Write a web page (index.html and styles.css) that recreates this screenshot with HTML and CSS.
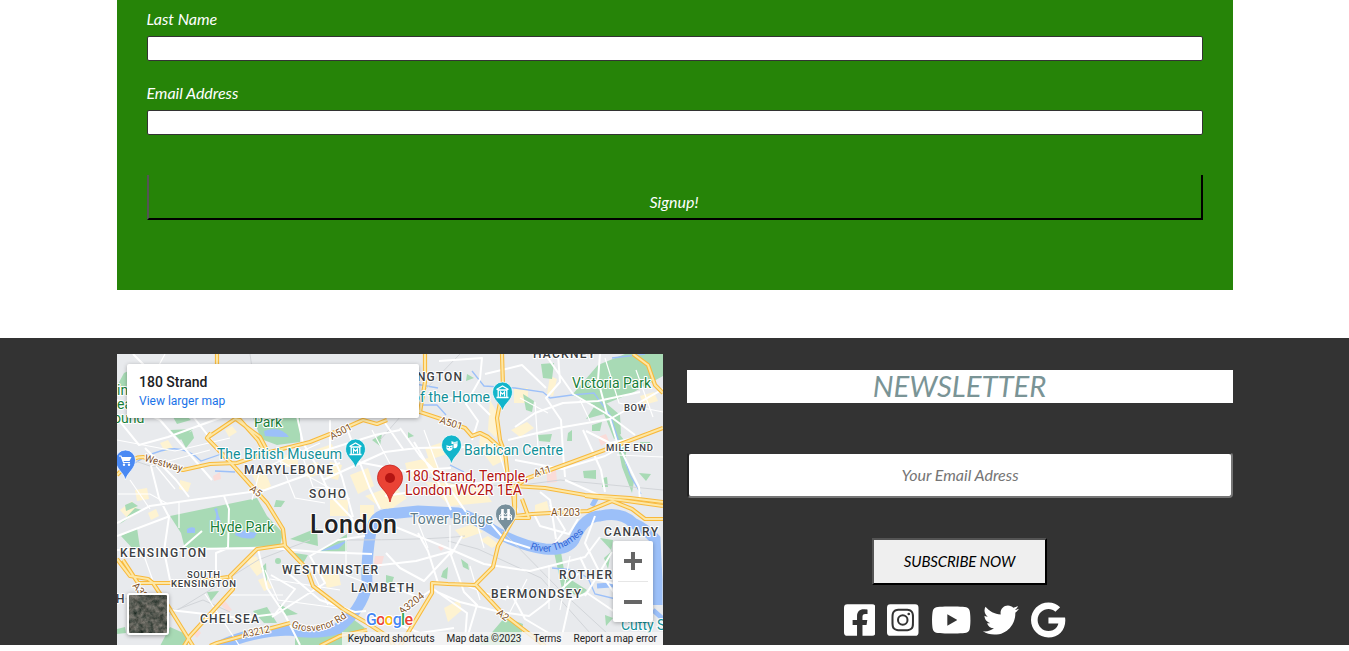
FILE: index.html
```html
<!DOCTYPE html>
<html lang="en">
<head>
<meta charset="utf-8">
<title>Newsletter signup</title>
<link rel="stylesheet" href="styles.css">
</head>
<body>
<form class="signup">
  <label class="signup-label" for="last">Last Name</label>
  <input class="signup-input" id="last" type="text">
  <label class="signup-label" for="email">Email Address</label>
  <input class="signup-input" id="email" type="text">
  <button class="signup-button" type="button">Signup!</button>
</form>
<footer class="footer">
  <div class="footer-inner">
    <div class="map">
      <svg class="map-canvas" viewBox="117 354 546 291">
        <defs>
          <g id="museum"><path class="pin" d="M0 15C-2 7-10 4-10-4A10 10 0 0 1 10-4C10 4 2 7 0 15Z"/><path d="M-6-6.500L0-10L6-6.500M-5-6H5M-4.300-6V1M4.300-6V1M-6 1.500H6" fill="none" stroke="#fff" stroke-width="1.300"/><path d="M-2 .500V-4L0-1.800L2-4V.500" fill="none" stroke="#fff" stroke-width="1.100"/></g>
          <g id="roads-major">
            <path d="M117 475L126 466Q132 457 143 457L166 465L183 470L210 464L237 463L270 452L310 442L345 428L363 420L377 424L387 420M420 412L438 418L465 428L472 436L480 433L488 437L505 452L508 478L513 490L515 516"/>
            <path d="M211 433L207 438L230 462L257 492L267 503L283 529L285 546L307 569L313 586L343 609L367 623L387 636L394 646"/>
            <path d="M207 438L235 419L240 420L258 440L265 453M236 419L260 437L268 452"/>
            <path d="M425 354V382L420 412L410 410M502 354L503 388L497 418L500 440L506 456"/>
            <path d="M513 488L528 478L572 462L618 445L663 428M513 486L545 488L585 495L630 498L663 502"/>
            <path d="M633 354L648 365L655 385L663 393M585 496L620 500L663 506M515 516L532 514L588 511L612 501L632 509L645 519L663 519"/>
            <path d="M285 545L257 549L230 576L233 589L190 636L184 646M117 559L130 576L148 579L153 583L170 609L193 646M123 560L138 583H185L228 577"/>
            <path d="M210 646L217 643L243 636L290 623M320 646L340 636L367 630"/>
            <path d="M400 646L432 593V583L448 584L475 585L493 567L498 546L515 516V490M475 584L502 613L545 646M515 518L529 518L522 499"/>
            <path d="M217 354V366L225 374"/>
          </g>
        </defs>
        <rect class="land" x="117" y="354" width="546" height="291"/>
        <g class="block-yellow">
          <path d="M160 443l8-3 5 8-8 4zM135 490l12-2 2 11-12 2zM180 480l11 3-3 9-9-3zM225 430l7-4 5 6-8 5zM280 455h18v12h-16zM302 466l16-4 3 12-14 4zM330 462l12 3-4 15-12-3zM350 475l18-7 6 18-16 8zM315 450l17-6 3 9-17 5zM252 475l12-6 7 17-10 7zM425 448l18-6 4 12-18 6zM405 463l28-6 8 14-32 7zM480 436l15 4 10 20-12 6-14-18zM365 496l28-10 14 12-20 14zM425 482l55 2 12 18-42 4zM490 400l10 18-4 20-8-8zM511 430l16-8 7 6-14 9zM514 388h14v15h-14zM550 376l7 3-4 17-6-2zM640 396l14-4 4 9-14 4zM322 575l16-4 3 14-14 3zM245 560l11-4 9 14-8 6zM258 580l8-3 6 11-8 3zM455 530l18-6 10 8-20 7zM480 540l8-4 10 8-6 4zM444 608l15-8 3 10-14 12zM360 505h14v17h-14zM330 500h18v16h-18zM535 505l12-4 2 9-14 3zM120 510l12-9 7 11-11 7zM148 513l8-4 3 7-8 4z"/>
        </g>
        <path class="park" d="M253 418H300V442L277 445L261 439ZM170 516L257 498L267 516L283 533L280 546L185 549L181 533ZM121 536L137 528L140 548L133 549ZM290 539L317 528L318 546ZM318 552L347 534V551ZM288 552L308 555L302 565ZM572 395L598 365L625 354H663V376L632 393L598 407ZM117 386L124 373L133 369V391ZM170 430L193 429L180 440ZM173 417L185 415L191 420L177 424ZM180 437L192 431L194 438L186 448ZM541 364L554 363L552 379L543 378ZM523 394L534 401L532 412L526 410ZM538 435L552 434L550 442L539 441ZM583 471L596 470L596 479L584 478ZM568 433L572 430V441H567ZM592 425L602 422L600 431H592ZM603 478L607 477L608 487H602ZM639 473L651 474L646 481ZM586 419L600 398L620 415L621 434L614 439L604 414ZM614 427L627 444L625 463L634 481L632 493L622 467ZM640 442H650L652 452H642ZM372 440L382 434L380 446ZM408 432L414 436L408 438ZM467 374L474 378L466 381ZM170 627L188 635L188 646H160ZM253 611L267 607L277 623H264ZM279 604L298 614L285 616ZM295 646V632L325 636L353 619L365 628L345 646ZM488 637L505 617L523 624L520 646H478ZM443 571L448 567L447 579L441 577ZM461 559L468 564L469 570L463 567ZM386 575L394 577L392 583H386ZM554 552L560 546L565 576L587 590L580 597L562 589ZM600 538L613 540L608 569L604 558L612 551ZM605 615L613 618L606 626ZM120 524L130 517L142 510L135 508ZM261 568L266 563L267 582ZM207 592L219 591L211 601ZM125 505L132 502L138 506L126 511ZM276 500L285 501L281 507H274ZM117 629L125 627L126 633L117 634Z"/>
        <circle class="park" cx="278" cy="561" r="3"/>
        <path class="hospital" d="M547 473l9-3 1 12-10 1zM598 437l8-3 3 7-8 5zM375 556h9l-3 11-7-3zM213 476l7-4 1 7-7 2zM221 605l4-4 7 9-4 2zM193 633l5-4 3 4-4 5zM438 547l3-3 4 3-4 4z"/>
        <path class="water-fill" d="M236 532q3-3 6-1l3-1q5 2 12 3l-3 5q-9 2-19-3zM187 529q4-3 8-1v5h-8zM214 509q4 6 1 12l6 1q-3-7-4-14zM264 431q16-6 25 6-14 0-24-1zM320 551l28-11-10 9z"/>
        <path class="stream" d="M133 464Q153 451 170 449T201 461L230 451M235 472L215 471M438 388L410 383M472 371L484 386L515 388L543 392L550 398L572 395L594 393L610 415L617 436L630 475L641 494M415 405H437L446 415M552 568L574 570L588 578L595 594L620 600M450 465L464 472M515 540L522 548M612 358L645 354"/>
        <path class="thames" d="M216 648Q249 631 290 630Q315 635 337 629Q362 610 367 585Q366 558 371 531Q374 515 389 514L418 511L458 513Q475 518 498 533Q522 546 545 549Q567 551 574 540Q584 516 600 516Q621 511 633 523Q646 529 655 539L657 580V605"/>
        <path class="stream wide" d="M597 586L625 584L653 589M653 610L663 619M592 506L597 497"/>
        <g class="rail">
          <path d="M117 598L145 600L176 610L203 600L230 612M128 630L158 622L210 590L258 560L310 540M420 475L455 484L515 486L560 480L663 490M448 541L478 549L541 578L590 633M340 540Q430 540 465 536M117 455L150 466L203 468M380 440L415 400L460 354M502 531L560 590L620 645M250 354L252 368"/>
        </g>
        <g class="road-minor">
          <path d="M117 418L139 445L168 437L228 415M133 354L184 405L235 470M117 400L160 420L212 480M117 523L150 506L199 499L265 490L340 463M145 448L176 480L189 497M151 466L159 498L169 517L164 551L170 580M117 550L180 550L202 531M181 549L270 548L318 552L372 554M224 496L229 509L228 548L216 553L216 572M258 549L267 588L285 615L300 645M283 569L320 600L355 612L366 611M272 617L325 583L310 556L338 540L365 536M271 575L295 589L275 614L240 618L170 610M117 536L170 516M297 416L303 443L318 468L330 495L351 517L359 535M330 420V449L342 477L353 517M346 426L357 455L370 489L380 509M310 455L375 435L400 430M323 480L385 452L417 448L469 447M400 428L420 456L444 480L466 512M385 423L403 449M385 496L450 486L508 480M414 442L439 484L451 510M363 463L405 471L451 468"/>
          <path d="M439 361L482 358L480 379L466 404L478 421L472 440M485 374L522 365L546 388M558 354L560 382L546 398L561 420L563 452L565 477M515 427L535 413L563 403L598 401L640 392M508 440L558 428L610 419L663 389M545 354L573 394L607 414L635 435M607 414L598 380L600 354M610 419L617 442L639 487L640 500M583 430L601 470L605 492M515 460L562 469L605 456L650 431M439 397L475 400L490 415M640 437L610 443L586 431M565 480L610 500M550 505L565 530L555 543"/>
          <path d="M393 526L452 550L484 564L530 571L585 557L600 537M453 550L424 581L400 568L386 553M462 536L451 555L464 592L477 605L465 645M372 566L416 561L452 551M437 592L460 602L500 612L529 616L545 604L579 573M560 645L570 600L587 593L612 610L632 620M585 596L601 570L612 552M507 586L525 619L552 635M389 621L420 633L454 628M386 584L420 598L434 588M418 533L428 551L438 583M486 518L505 540L530 548M556 539L550 500L540 492M533 512L540 526L569 534L578 519M580 557L590 578L629 587M432 588L467 613L465 640M595 516L585 543L599 571L615 594"/>
        </g>
        <g class="lanes">
          <path d="M165 354L151 380L165 402L190 390M117 440L175 451L230 438M179 501V528M142 550L153 581M150 466L210 450M252 500L260 470L320 443M300 449L313 487L344 489M280 461L295 498L325 503M269 455L350 499M372 430L390 464M424 430L438 468M500 456L518 512M417 520L428 548M450 525V550M476 520L484 548M310 566L328 605M346 540V575L374 586M265 570L278 600L338 608M270 579L340 590M205 594L239 645M226 595L283 595M470 566L480 600M455 582L506 600M527 579L510 612M549 565L549 609M570 556L560 610M605 358L619 403L663 412M636 370L653 417M535 402L538 448M580 400L590 421M520 398L548 413M617 455L663 457M118 494H150L168 504M130 480L150 509M156 466L175 489"/>
        </g>
        <use href="#roads-major" class="major-edge"/>
        <use href="#roads-major" class="major-fill"/>
        <g class="poi">
          <text x="572" y="388" class="green" textLength="79">Victoria Park</text>
          <text x="210" y="532" class="green" textLength="64">Hyde Park</text>
          <text x="254" y="427" class="green" textLength="28">Park</text>
          <text x="117" y="395" class="green">in</text><text x="117" y="409" class="green">ea</text><text x="113" y="423" class="green">ound</text>
          <text x="217" y="459" class="teal" textLength="125">The British Museum</text>
          <text x="412" y="402" class="teal" textLength="78">of the Home</text>
          <text x="464" y="455" class="teal" textLength="99">Barbican Centre</text>
          <text x="621" y="630" class="teal">Cutty S</text>
          <text x="410" y="524" class="slate" textLength="83">Tower Bridge</text>
        </g>
        <g class="district">
          <text x="533" y="358" textLength="62">HACKNEY</text><text x="417" y="381" textLength="45">NGTON</text>
          <text x="244" y="474" textLength="89">MARYLEBONE</text><text x="309" y="498" textLength="37">SOHO</text>
          <text x="120" y="557" textLength="86">KENSINGTON</text><text x="282" y="574" textLength="96">WESTMINSTER</text>
          <text x="351" y="592" textLength="63">LAMBETH</text><text x="200" y="623" textLength="59">CHELSEA</text>
          <text x="491" y="598" textLength="90">BERMONDSEY</text><text x="559" y="579" textLength="53">ROTHER</text>
          <text x="604" y="536" textLength="54">CANARY</text><text x="116" y="603">H</text>
          <g class="small"><text x="624" y="411" textLength="22">BOW</text><text x="606" y="451" textLength="47">MILE END</text><text x="187" y="578" textLength="33">SOUTH</text><text x="171" y="587" textLength="65">KENSINGTON</text></g>
        </g>
        <g class="road-label">
          <text transform="translate(332 440) rotate(-28)">A501</text><text transform="translate(439 423) rotate(17)">A501</text>
          <text transform="translate(144 461) rotate(16)" textLength="39">Westway</text><text transform="translate(249 490) rotate(38)">A5</text>
          <text transform="translate(535 477) rotate(-17)">A11</text><text x="551" y="516">A1203</text>
          <text transform="translate(496 614) rotate(37)">A2</text><text transform="translate(402 615) rotate(-38)">A3204</text>
          <text transform="translate(243 638) rotate(-12)" textLength="28">A3212</text><text transform="translate(132 586) rotate(50)">A3220</text>
          <path id="grosvenor" d="M291 627Q321 640 352 613" fill="none" stroke="none"/><text><textPath href="#grosvenor" textLength="60">Grosvenor Rd</textPath></text>
        </g>
        <path id="river" d="M530 549Q558 560 588 528" fill="none"/><text class="river-label"><textPath href="#river" textLength="60">River Thames</textPath></text>
        <text class="city" x="310" y="533" textLength="87">London</text>
        <use href="#museum" x="355.500" y="453"/><use href="#museum" x="502.500" y="396"/>
        <g transform="translate(451.500 449)"><path class="pin" d="M0 15C-2 7-10 4-10-4A10 10 0 0 1 10-4C10 4 2 7 0 15Z"/><path d="M-5-4Q-2-2 1-4V0Q-2 4-5 0ZM0-8Q3-6 6-8V-3Q5 0 2-1V-5H0Z" fill="#fff"/><path d="M-4-1.500h1.300M-1.300-1.500h1.300M2-6h1M4-6h1" stroke="#12b5cb"/></g>
        <g transform="translate(505.500 518)"><path fill="#78909c" stroke="#fff" stroke-width=".7" d="M0 15C-2 7-10 4-10-4A10 10 0 0 1 10-4C10 4 2 7 0 15Z"/><path d="M-3-9V2M3-9V2" stroke="#fff" stroke-width="2.600"/><path d="M-6.500-1H6.500" stroke="#fff" stroke-width="1.600"/><path d="M-6-1V2M6-1V2M-6.500-2Q-4-3-3-7M6.500-2Q4-3 3-7M-2-5Q0-2 2-5" fill="none" stroke="#fff"/></g>
        <g transform="translate(125.500 465)"><path fill="#4a89f3" stroke="#fff" stroke-width=".7" d="M0 15C-2 7-10 4-10-5A10 10 0 0 1 10-5C10 4 2 7 0 15Z"/><path d="M-6.500-9H-4.500L-2-2.500H4.500" fill="none" stroke="#fff" stroke-width="1.100"/><path d="M-4.200-8H6L4-4H-2.500Z" fill="#fff"/><circle cx="-1.500" cy="-.3" r="1.200" fill="#fff"/><circle cx="3.500" cy="-.3" r="1.200" fill="#fff"/></g>
        <path d="M390 502C388 490 377.500 488 377.500 477.500A12.500 12.500 0 0 1 402.500 477.500C402.500 488 392 490 390 502Z" fill="#ea4335" stroke="#c5221f" stroke-width=".8"/><circle cx="390" cy="478" r="5" fill="#b31412"/>
        <g class="place"><text x="405" y="481" textLength="123">180 Strand, Temple,</text><text x="405" y="495" textLength="117">London WC2R 1EA</text></g>
        <text class="google" x="366" y="625" textLength="47"><tspan fill="#4285f4">G</tspan><tspan fill="#ea4335">o</tspan><tspan fill="#fbbc04">o</tspan><tspan fill="#4285f4">g</tspan><tspan fill="#34a853">l</tspan><tspan fill="#ea4335">e</tspan></text>
      </svg>
      <div class="place-card"><div class="place-name">180 Strand</div><a class="place-link">View larger map</a></div>
      <svg class="satellite" viewBox="0 0 38 38">
        <filter id="terrain" x="0" y="0" width="1" height="1" color-interpolation-filters="sRGB"><feTurbulence type="fractalNoise" baseFrequency=".2" numOctaves="5" seed="8"/><feColorMatrix values=".5 .2 0 0 0 .4 .2 0 0 .06 .4 .2 0 0 .03 0 0 0 0 1"/></filter>
        <rect width="38" height="38" filter="url(#terrain)"/>
      </svg>
      <div class="zoom-control"><span class="zoom-in"></span><span class="zoom-out"></span></div>
      <div class="map-credit"><span>Keyboard shortcuts</span><span>Map data ©2023</span><span>Terms</span><span>Report a map error</span></div>
    </div>
    <div class="newsletter">
      <h2 class="newsletter-title">NEWSLETTER</h2>
      <input class="newsletter-input" type="text" placeholder="Your Email Adress">
      <button class="newsletter-button" type="button">SUBSCRIBE NOW</button>
      <div class="social">
        <svg viewBox="0 0 448 512"><path d="M400 32H48A48 48 0 0 0 0 80v352a48 48 0 0 0 48 48h137.250V327.690h-63V256h63v-54.640c0-62.150 37-96.480 93.670-96.480 27.140 0 55.520 4.840 55.520 4.840v61h-31.270c-30.810 0-40.420 19.120-40.420 38.730V256h68.780l-11 71.690h-57.780V480H400a48 48 0 0 0 48-48V80a48 48 0 0 0-48-48z"/></svg>
        <svg viewBox="0 0 448 512"><path d="M224,202.660A53.340,53.340,0,1,0,277.360,256,53.380,53.380,0,0,0,224,202.660Zm124.710-41a54,54,0,0,0-30.410-30.410c-21-8.290-71-6.430-94.300-6.430s-73.250-1.930-94.310,6.430a54,54,0,0,0-30.410,30.410c-8.280,21-6.430,71.050-6.430,94.330S91,329.260,99.320,350.330a54,54,0,0,0,30.410,30.410c21,8.290,71,6.430,94.310,6.430s73.240,1.930,94.300-6.430a54,54,0,0,0,30.410-30.410c8.350-21,6.430-71.050,6.430-94.330S357.100,182.740,348.750,161.670ZM224,338a82,82,0,1,1,82-82A81.900,81.900,0,0,1,224,338Zm85.380-148.300a19.140,19.140,0,1,1,19.130-19.140A19.100,19.100,0,0,1,309.420,189.740ZM400,32H48A48,48,0,0,0,0,80V432a48,48,0,0,0,48,48H400a48,48,0,0,0,48-48V80A48,48,0,0,0,400,32ZM382.880,322c-1.290,25.630-7.140,48.340-25.850,67s-41.400,24.630-67,25.850c-26.410,1.490-105.590,1.490-132,0-25.630-1.290-48.260-7.150-67-25.850s-24.630-41.420-25.850-67c-1.490-26.420-1.490-105.610,0-132,1.290-25.630,7.070-48.340,25.850-67s41.470-24.560,67-25.780c26.410-1.490,105.590-1.490,132,0,25.630,1.290,48.330,7.150,67,25.850s24.630,41.420,25.850,67.050C384.370,216.440,384.370,295.560,382.880,322Z"/></svg>
        <svg viewBox="0 0 576 512"><path d="M549.655 124.083c-6.281-23.650-24.787-42.276-48.284-48.597C458.781 64 288 64 288 64S117.220 64 74.629 75.486c-23.497 6.322-42.003 24.947-48.284 48.597-11.412 42.867-11.412 132.305-11.412 132.305s0 89.438 11.412 132.305c6.281 23.650 24.787 41.500 48.284 47.821C117.220 448 288 448 288 448s170.780 0 213.371-11.486c23.497-6.321 42.003-24.171 48.284-47.821 11.412-42.867 11.412-132.305 11.412-132.305s0-89.438-11.412-132.305zm-317.510 213.508V175.185l142.739 81.205-142.739 81.201z"/></svg>
        <svg viewBox="0 0 512 512"><path d="M459.370 151.716c.325 4.548.325 9.097.325 13.645 0 138.720-105.583 298.558-298.558 298.558-59.452 0-114.680-17.219-161.137-47.106 8.447.974 16.568 1.299 25.340 1.299 49.055 0 94.213-16.568 130.274-44.832-46.132-.975-84.792-31.188-98.112-72.772 6.498.974 12.995 1.624 19.818 1.624 9.421 0 18.843-1.300 27.614-3.573-48.081-9.747-84.143-51.980-84.143-102.985v-1.299c13.969 7.797 30.214 12.670 47.431 13.319-28.264-18.843-46.781-51.005-46.781-87.391 0-19.492 5.197-37.360 14.294-52.954 51.655 63.675 129.300 105.258 216.365 109.807-1.624-7.797-2.599-15.918-2.599-24.040 0-57.828 46.782-104.934 104.934-104.934 30.213 0 57.502 12.670 76.670 33.137 23.715-4.548 46.456-13.320 66.599-25.340-7.798 24.366-24.366 44.833-46.132 57.827 21.117-2.273 41.584-8.122 60.426-16.243-14.292 20.791-32.161 39.308-52.628 54.253z"/></svg>
        <svg viewBox="0 0 488 512"><path d="M488 261.800C488 403.300 391.100 504 248 504 110.800 504 0 393.200 0 256S110.800 8 248 8c66.800 0 123 24.500 166.300 64.900l-67.500 64.900C258.500 52.600 94.300 116.600 94.300 256c0 86.500 69.100 156.600 153.700 156.600 98.200 0 135-70.400 140.800-106.900H248v-85.300h236.100c2.300 12.700 3.900 24.900 3.900 41.400z"/></svg>
      </div>
    </div>
  </div>
</footer>
</body>
</html>
```
FILE: styles.css
```css
* { box-sizing: border-box; }
body { margin: 0; background: #fff; font: italic 16px/24px Lato, sans-serif; overflow: hidden; }

.signup { display: flex; flex-direction: column; width: 1116px; height: 290px; margin: 0 auto 0 117px; padding: 7px 30px 0; background: #268408; color: #fff; }
.signup-label { height: 24px; margin: 0 0 5px -.5px; letter-spacing: -.03px; }
.signup-input { width: 1056px; height: 25px; margin: 0 0 20px; border: 1px solid #333; border-radius: 2px; background: #fff; }
.signup-button { width: 1056px; height: 45px; margin-top: 20px; padding: 10px 2px 0 0; border: 2px outset #000; border-top: 0; background: transparent; color: #fff; font: italic 16px/24px Lato, sans-serif; }

.footer { height: 307px; margin-top: 48px; padding: 16px 0 0 117px; background: #333; }
.footer-inner { display: grid; grid-template-columns: 546px 546px; gap: 24px; }

.map { position: relative; height: 291px; overflow: hidden; font-family: Roboto, sans-serif; font-style: normal; }
.map-canvas { display: block; width: 546px; height: 291px; }
.land { fill: #e8eaed; }
.block-yellow { fill: #fef3d1; }
.park { fill: #a8dab5; }
.hospital { fill: #fadcd9; }
.water-fill { fill: #9cc0f9; }
.stream { fill: none; stroke: #9cc0f9; stroke-width: 1.300px; }
.stream.wide { stroke-width: 5px; }
.thames { fill: none; stroke: #9cc0f9; stroke-width: 11px; }
.rail { fill: none; stroke: #d2d5d9; stroke-width: 1px; }
.road-minor { fill: none; stroke: #fff; stroke-width: 2px; stroke-linejoin: round; }
.lanes { fill: none; stroke: #fff; stroke-width: 1.200px; }
.major-edge { fill: none; stroke: #f8b93c; stroke-width: 4.200px; stroke-linejoin: round; }
.major-fill { fill: none; stroke: #fde7a5; stroke-width: 2.100px; stroke-linejoin: round; }
.pin { fill: #12b5cb; stroke: #fff; stroke-width: .7px; }
.map-canvas text { font-style: normal; paint-order: stroke; stroke: #fff; stroke-width: 2.200px; stroke-linejoin: round; }
.poi { font-size: 14px; }
.green { fill: #188038; }
.teal { fill: #129098; }
.slate { fill: #607d8b; }
.district { fill: #3c4043; font-size: 12px; font-weight: 500; }
.district .small { font-size: 9.500px; }
.road-label { fill: #80511f; font-size: 10px; }
.map-canvas .river-label { fill: #3367d6; stroke: none; font-size: 10px; }
.city { fill: #202124; font-size: 25px; font-weight: 500; }
.place { fill: #b31412; font-size: 14px; }
.google { font-size: 16px; font-weight: 500; }

.place-card { position: absolute; left: 10px; top: 10px; width: 292px; height: 54px; padding: 10px 12px; background: #fff; box-shadow: 0 1px 4px rgba(0, 0, 0, .3); border-radius: 2px; }
.place-name { font-size: 14px; font-weight: 500; line-height: 16px; color: #202124; }
.place-link { display: block; margin-top: 3px; font-size: 12px; line-height: 16px; color: #1a73e8; }
.satellite { position: absolute; left: 10px; top: 239px; width: 42px; height: 42px; border: 2px solid #fff; border-radius: 3px; box-shadow: 0 1px 4px rgba(0, 0, 0, .35); }
.zoom-control { position: absolute; left: 496px; top: 187px; display: flex; flex-direction: column; width: 40px; height: 81px; padding: 0 5px; background: #fff; border-radius: 2px; box-shadow: 0 1px 4px rgba(0, 0, 0, .3); }
.zoom-in, .zoom-out { flex: 1; background: linear-gradient(#666, #666) center/18px 4px no-repeat; }
.zoom-in { border-bottom: 1px solid #e6e6e6; background: linear-gradient(#666, #666) center/18px 4px no-repeat, linear-gradient(#666, #666) center/4px 18px no-repeat; }
.map-credit { position: absolute; right: 0; bottom: 0; display: flex; gap: 12px; height: 13px; padding: 0 6px; background: rgba(245, 245, 245, .8); color: #222; font-size: 10px; line-height: 13px; white-space: nowrap; }

.newsletter { display: flex; flex-direction: column; align-items: center; padding-top: 16px; }
.newsletter-title { width: 546px; height: 33px; margin: 0; padding-right: 1px; background: #fff; color: #7a9496; font-size: 29.300px; line-height: 32px; font-weight: 400; text-align: center; }
.newsletter-input { width: 546px; height: 46px; margin-top: 49px; padding: 0 2px 2px; border: 2px solid; border-color: #333 #767676 #767676 #222; border-radius: 4px; background: #fff; font: italic 16px/24px Lato, sans-serif; text-align: center; }
.newsletter-input::placeholder { color: #757575; }
.newsletter-button { width: 175px; height: 47px; margin: 40px 1px 0 0; padding: 0 0 2px; border: 2px outset #000; background: #efefef; color: #000; font: italic 15px/24px Lato, sans-serif; letter-spacing: -.15px; }
.social { display: flex; align-self: flex-start; gap: 12.100px; margin: 17px 0 0 156.600px; }
.social svg { height: 36px; fill: #fff; }
```
